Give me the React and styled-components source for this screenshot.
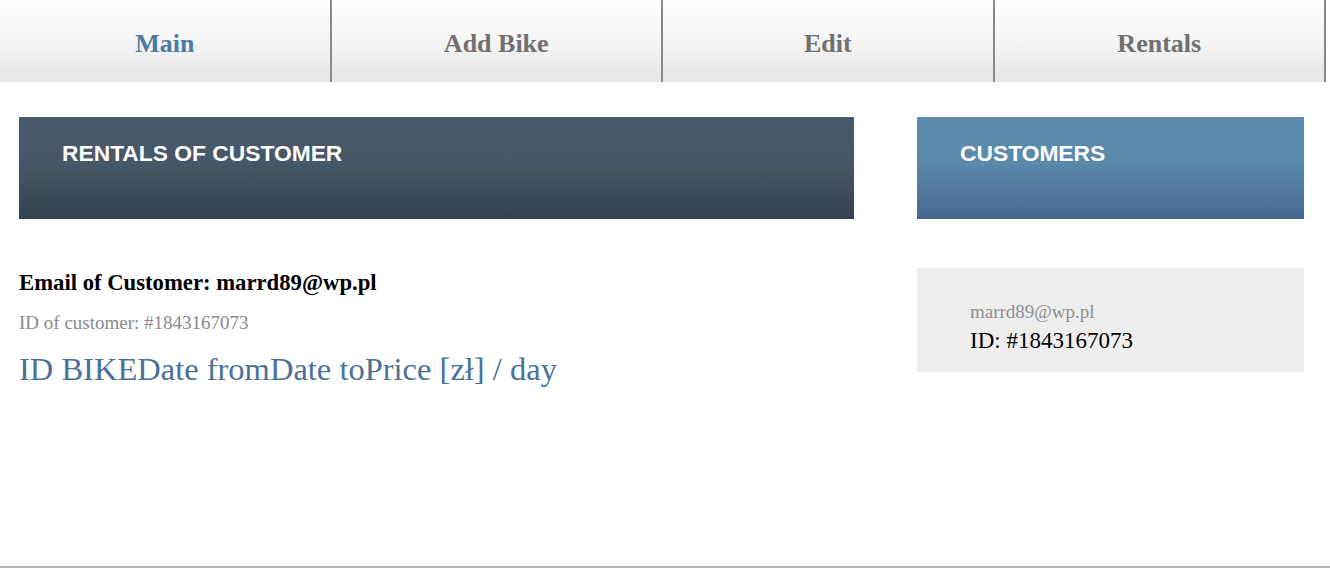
import styled, { createGlobalStyle } from 'styled-components'

const GlobalStyle = createGlobalStyle`
    html, body {
        margin: 0;
        padding: 0;
        background: #fff;
        font-family: "Liberation Serif", "Times New Roman", serif;
    }
`;

const NavBar = styled.nav`
    display: flex;
    height: 82px;
`;

const NavItem = styled.a`
    display: flex;
    align-items: center;
    justify-content: center;
    box-sizing: border-box;
    width: 331.5px;
    height: 82px;
    padding-top: 6px;
    border-right: 2px solid #8a8a8a;
    background: linear-gradient(to bottom, #ffffff 0%, #f6f6f6 45%, #e6e6e6 100%);
    font-family: "Liberation Serif", "Times New Roman", serif;
    font-weight: bold;
    font-size: 26px;
    color: ${props => (props.$active ? '#4f7a9f' : '#707070')};
    text-decoration: none;
    cursor: pointer;
`;

const Main = styled.main`
    display: grid;
    grid-template-columns: 835px 387px;
    column-gap: 63px;
    align-items: start;
    padding: 35px 0 0 19px;
    min-height: 484px;
    box-sizing: border-box;
`;

const PanelHeader = styled.div`
    height: 102px;
    box-sizing: border-box;
    padding: 24px 0 0 43px;
    background: ${props => props.$light
        ? 'linear-gradient(to bottom, #5c8cae 0%, #5a89ab 45%, #476890 100%)'
        : 'linear-gradient(to bottom, #4b5a6a 0%, #485767 45%, #34414e 100%)'};
    color: #fff;
    font-family: "Liberation Sans", Arial, sans-serif;
    font-weight: bold;
    font-size: 22.8px;
    line-height: 1.117;
`;

const CustomerEmail = styled.div`
    margin-top: 50px;
    font-size: 22.7px;
    font-weight: bold;
    line-height: 1.2;
    color: #000;
`;

const CustomerId = styled.div`
    margin-top: 16px;
    font-size: 19px;
    line-height: 1.2;
    color: #8a8a8a;
`;

const RentalsHead = styled.div`
    margin-top: 15px;
    font-size: 32.5px;
    line-height: 1.2;
    color: #4c7199;
`;

const CustomerCard = styled.div`
    margin-top: 49px;
    height: 104px;
    box-sizing: border-box;
    padding: 33px 0 0 53px;
    background: #eeeeee;
`;

const CardEmail = styled.div`
    font-size: 19px;
    line-height: 1.2;
    color: #8e8e8e;
`;

const CardId = styled.div`
    margin-top: 3px;
    font-size: 23px;
    line-height: 1.2;
    color: #000;
`;

const Footer = styled.footer`
    border-top: 2px solid #b5b5b5;
`;

const navLinks = ['Main', 'Add Bike', 'Edit', 'Rentals']
const tableColumns = ['ID BIKE', 'Date from', 'Date to', 'Price [zł] / day']

const App = () => {
    return (
        <div>
            <GlobalStyle />
            <NavBar>
                {navLinks.map(link => (
                    <NavItem key={link} $active={link === 'Main'}>{link}</NavItem>
                ))}
            </NavBar>
            <Main>
                <section>
                    <PanelHeader>RENTALS OF CUSTOMER</PanelHeader>
                    <CustomerEmail>Email of Customer: marrd89@wp.pl</CustomerEmail>
                    <CustomerId>ID of customer: #1843167073</CustomerId>
                    <RentalsHead>
                        {tableColumns.map(col => <span key={col}>{col}</span>)}
                    </RentalsHead>
                </section>
                <aside>
                    <PanelHeader $light>CUSTOMERS</PanelHeader>
                    <CustomerCard>
                        <CardEmail>marrd89@wp.pl</CardEmail>
                        <CardId>ID: #1843167073</CardId>
                    </CustomerCard>
                </aside>
            </Main>
            <Footer />
        </div>
    );
}

export default App;
